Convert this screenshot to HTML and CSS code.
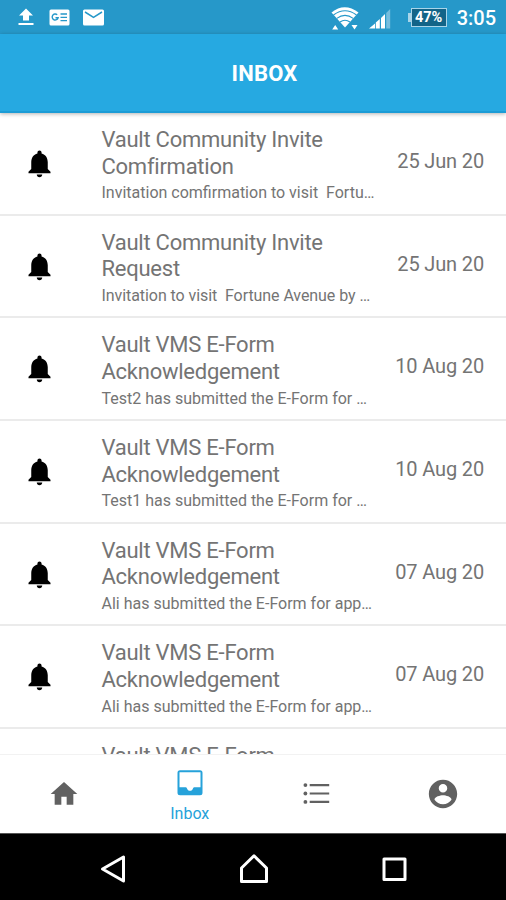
FILE: index.html
```html
<!DOCTYPE html>
<html lang="en">
<head>
<meta charset="utf-8">
<title>Inbox</title>
<link rel="stylesheet" href="styles.css">
</head>
<body>
<svg class="defs" width="0" height="0" aria-hidden="true">
  <symbol id="bell" viewBox="0 0 24 24"><path d="M12 22c1.1 0 2-.9 2-2h-4c0 1.1.9 2 2 2zm6-6v-5c0-3.07-1.64-5.64-4.5-6.32V4c0-.83-.67-1.5-1.5-1.5s-1.5.67-1.5 1.5v.68C7.63 5.36 6 7.92 6 11v5l-2 2v1h16v-1l-2-2z"/></symbol>
</svg>
<div class="screen">
  <div class="status">
    <svg class="notices" viewBox="0 0 110 34">
      <path d="M26 8.500l7 7h-4v5h-6v-5h-4zM18.500 23h15v2h-15z" fill="#fff"/>
      <rect x="49.500" y="9.500" width="20" height="16" rx="1.500" fill="#fff"/>
      <path d="M57.200 14.800a3 3 0 1 0 .9 3h-2.600" fill="none" stroke="#2698c9" stroke-width="1.400"/>
      <path d="M60.500 14h6.500M60.500 17.300h6.500M60.500 20.600h6.500" stroke="#2698c9" stroke-width="1.300"/>
      <rect x="83" y="9.500" width="21" height="16" rx="1.500" fill="#fff"/>
      <path d="M85 12l8.500 5.300L102 12" fill="none" stroke="#2698c9" stroke-width="1.500"/>
    </svg>
    <div class="indicators">
      <svg class="signals" viewBox="0 0 64 34">
        <path d="M0.500 12.500Q13.500 2 27.500 12.500L14 27.500z" fill="#fff"/>
        <path d="M2.500 15Q14 6.500 25.500 15M5.800 18.400Q14 12.400 22.200 18.400M9 22Q14 18.400 19 22" fill="none" stroke="#2698c9" stroke-width="1.100"/>
        <path d="M1.200 29.500l3-4.500 3 4.500zM20.500 25h6l-3 4.500z" fill="#fff"/>
        <path d="M38 28.500l6-5v5zM44.800 22.500l4-3.500v9.500h-4zM50 18l4-4v14.500h-4z" fill="#fff"/>
        <path d="M55.200 13l4-4v19.500h-4z" fill="#76bddd"/>
      </svg>
      <div class="battery">47%</div>
      <div class="clock">3:05</div>
    </div>
  </div>
  <header class="header"><h1>INBOX</h1></header>
  <main class="list">
    <article class="row"><svg class="bell"><use href="#bell"/></svg><div class="body"><h2>Vault Community Invite<br>Comfirmation</h2><p>Invitation comfirmation to visit &nbsp;Fortu…</p></div><time>25 Jun 20</time></article>
    <article class="row"><svg class="bell"><use href="#bell"/></svg><div class="body"><h2>Vault Community Invite<br>Request</h2><p class="tight">Invitation to visit &nbsp;Fortune Avenue by …</p></div><time>25 Jun 20</time></article>
    <article class="row"><svg class="bell"><use href="#bell"/></svg><div class="body"><h2>Vault VMS E-Form<br>Acknowledgement</h2><p>Test2 has submitted the E-Form for …</p></div><time>10 Aug 20</time></article>
    <article class="row"><svg class="bell"><use href="#bell"/></svg><div class="body"><h2>Vault VMS E-Form<br>Acknowledgement</h2><p>Test1 has submitted the E-Form for …</p></div><time>10 Aug 20</time></article>
    <article class="row"><svg class="bell"><use href="#bell"/></svg><div class="body"><h2>Vault VMS E-Form<br>Acknowledgement</h2><p>Ali has submitted the E-Form for app…</p></div><time>07 Aug 20</time></article>
    <article class="row"><svg class="bell"><use href="#bell"/></svg><div class="body"><h2>Vault VMS E-Form<br>Acknowledgement</h2><p>Ali has submitted the E-Form for app…</p></div><time>07 Aug 20</time></article>
    <article class="row"><div class="bell"></div><div class="body"><h2>Vault VMS E-Form</h2></div></article>
  </main>
  <nav class="tabs">
    <a class="tab"><svg class="home" viewBox="0 0 24 24"><path d="M10 20v-6h4v6h5v-8h3L12 3 2 12h3v8z"/></svg></a>
    <a class="tab active"><svg class="tray" viewBox="0 0 26 26"><path fill-rule="evenodd" d="M3 0.300h20a2.500 2.500 0 0 1 2.500 2.500v20a2.500 2.500 0 0 1-2.500 2.500H3a2.500 2.500 0 0 1-2.500-2.500v-20A2.500 2.500 0 0 1 3 0.300zM2.500 2.300v15h6.300c.8 0 1 .9 1.600 2 1 2 4.200 2 5.200 0 .6-1.100.8-2 1.600-2h6.300v-15z"/></svg><span>Inbox</span></a>
    <a class="tab"><svg class="lines" viewBox="0 0 26 22"><path d="M6.200 1h19.500v2.200H6.200zM6.200 9.400h19.500v2.200H6.200zM6.200 17.800h19.500V20H6.200z"/><circle cx="1.900" cy="2.100" r="1.900"/><circle cx="1.900" cy="10.500" r="1.900"/><circle cx="1.900" cy="18.900" r="1.900"/></svg></a>
    <a class="tab"><svg class="account" viewBox="0 0 24 24"><path d="M12 2C6.480 2 2 6.480 2 12s4.480 10 10 10 10-4.480 10-10S17.520 2 12 2zm0 3c1.660 0 3 1.340 3 3s-1.340 3-3 3-3-1.340-3-3 1.340-3 3-3zm0 14.200c-2.500 0-4.710-1.280-6-3.220.03-1.990 4-3.080 6-3.080 1.990 0 5.970 1.090 6 3.080-1.290 1.940-3.500 3.220-6 3.220z"/></svg></a>
  </nav>
  <div class="system">
    <svg viewBox="0 0 28 32"><path d="M23.500 4v24L2.500 16z"/></svg>
    <svg viewBox="0 0 28 32"><path d="M1.500 28.500V15L14 2.800 26.500 15v13.500z"/></svg>
    <svg viewBox="0 0 28 32"><path d="M4 6h21v20.500H4z"/></svg>
  </div>
</div>
</body>
</html>
```

FILE: styles.css
```css
* { box-sizing: border-box; margin: 0; padding: 0; }
body { width: 506px; height: 900px; overflow: hidden; background: #fff; font-family: Roboto, sans-serif; color: #747474; }
.defs { display: block; }
.screen { display: flex; flex-direction: column; height: 900px; }
.status { flex: none; height: 34px; background: #2698c9; display: flex; justify-content: space-between; color: #fff; }
.notices { width: 110px; height: 34px; }
.indicators { display: flex; align-items: center; padding-right: 10px; }
.signals { width: 64px; height: 34px; margin-right: 16px; }
.battery { position: relative; width: 36px; height: 19px; margin-right: 10px; border: 1.500px solid #a9d5e9; background: #126488; font-size: 14.500px; font-weight: 700; line-height: 17px; text-align: center; }
.battery::before { content: ""; position: absolute; left: -4px; top: 4px; width: 3px; height: 9px; background: #a9d5e9; }
.clock { font-size: 20px; font-weight: 500; line-height: 34px; padding-top: 2px; }
.header { flex: none; height: 79px; background: #26a9e1; border-bottom: 2px solid #1c9cd6; display: flex; align-items: center; justify-content: center; box-shadow: 0 1px 4px rgba(0, 0, 0, .3); z-index: 1; padding: 3px 0 0 23px; }
h1 { color: #fff; font-size: 22px; font-weight: 700; line-height: 26px; letter-spacing: .2px; }
.list { flex: none; height: 641px; overflow: hidden; }
.row { height: 102.700px; border-bottom: 2px solid #ebebeb; display: flex; padding-right: 22px; }
.bell { width: 33px; height: 33px; margin: 34px 0 0 23px; fill: #000; flex: none; }
.body { flex: 1; margin-left: 45.500px; padding-top: 14px; white-space: nowrap; }
h2 { font-size: 22px; font-weight: 400; line-height: 26.700px; letter-spacing: -.25px; }
p { font-size: 16px; line-height: 20px; margin-top: 3px; }
.tight { letter-spacing: -.07px; }
time { font-size: 20px; line-height: 24px; margin-top: 36px; letter-spacing: -.15px; }
.tabs { flex: none; height: 79px; background: #fff; border-top: 1px solid #f2f2f2; display: flex; }
.tab { flex: 1; display: flex; flex-direction: column; align-items: center; justify-content: center; fill: #616161; }
.active { fill: #26a2da; color: #26a2da; justify-content: flex-start; padding-top: 15px; }
.home { width: 32px; height: 32px; margin-left: 1px; }
.tray { width: 26px; height: 26px; }
.tab span { font-size: 16px; line-height: 20px; margin-top: 8px; }
.lines { width: 27px; height: 22px; }
.account { width: 34px; height: 34px; }
.system { flex: 1; background: #000; border-top: 1px solid #555; display: flex; align-items: center; justify-content: space-between; padding: 4px 98px 0 100px; }
.system svg { width: 28px; height: 32px; fill: none; stroke: #fff; stroke-width: 3; stroke-linejoin: round; }
```
